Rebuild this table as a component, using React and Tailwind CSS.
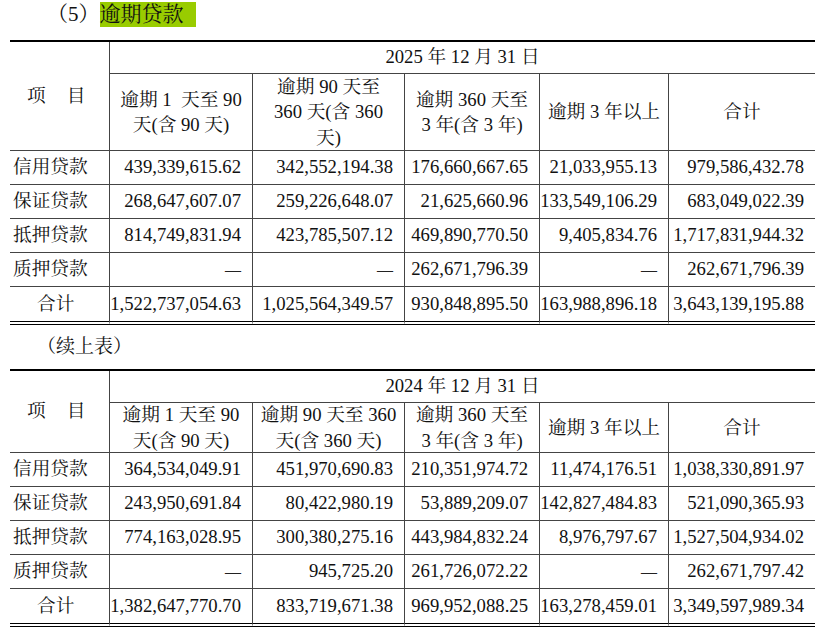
import React from "react";

const grid = "grid grid-cols-[100px_143px_152px_135px_129px_146px]";
const line = "border-[#444]";

const table2025 = {
  year: "2025 年 12 月 31 日",
  headH: "h-[77px]",
  heads: [
    ["逾期 1\u00a0 天至 90", "天(含 90 天)"],
    ["逾期 90 天至", "360 天(含 360", "天)"],
    ["逾期 360 天至", "3 年(含 3 年)"],
    ["逾期 3 年以上"],
    ["合计"],
  ],
  rows: [
    ["信用贷款", "439,339,615.62", "342,552,194.38", "176,660,667.65", "21,033,955.13", "979,586,432.78"],
    ["保证贷款", "268,647,607.07", "259,226,648.07", "21,625,660.96", "133,549,106.29", "683,049,022.39"],
    ["抵押贷款", "814,749,831.94", "423,785,507.12", "469,890,770.50", "9,405,834.76", "1,717,831,944.32"],
    ["质押贷款", "—", "—", "262,671,796.39", "—", "262,671,796.39"],
  ],
  total: ["合计", "1,522,737,054.63", "1,025,564,349.57", "930,848,895.50", "163,988,896.18", "3,643,139,195.88"],
};

const table2024 = {
  year: "2024 年 12 月 31 日",
  headH: "h-[50px]",
  heads: [
    ["逾期 1 天至 90", "天(含 90 天)"],
    ["逾期 90 天至 360", "天(含 360 天)"],
    ["逾期 360 天至", "3 年(含 3 年)"],
    ["逾期 3 年以上"],
    ["合计"],
  ],
  rows: [
    ["信用贷款", "364,534,049.91", "451,970,690.83", "210,351,974.72", "11,474,176.51", "1,038,330,891.97"],
    ["保证贷款", "243,950,691.84", "80,422,980.19", "53,889,209.07", "142,827,484.83", "521,090,365.93"],
    ["抵押贷款", "774,163,028.95", "300,380,275.16", "443,984,832.24", "8,976,797.67", "1,527,504,934.02"],
    ["质押贷款", "—", "945,725.20", "261,726,072.22", "—", "262,671,797.42"],
  ],
  total: ["合计", "1,382,647,770.70", "833,719,671.38", "969,952,088.25", "163,278,459.01", "3,349,597,989.34"],
};

function Num({ value, last, bottom, h }) {
  return (
    <div
      className={`${h} flex items-center justify-end pr-[11px] whitespace-nowrap ${bottom} ${
        last ? "" : `border-r ${line}`
      }`}
    >
      {value === "—" ? <span className="text-[16px] text-[#222]">—</span> : value}
    </div>
  );
}

function LoanTable({ data }) {
  return (
    <div className={`${grid} ml-[10px] w-[805px] border-t-2 border-black text-[18.7px]`}>
      {/* 项目 */}
      <div className={`row-span-2 flex items-center pl-[17px] gap-[21px] border-r border-b ${line}`}>
        <span>项</span>
        <span>目</span>
      </div>
      <div className={`col-span-5 h-[32px] flex items-center justify-center border-b ${line}`}>
        {data.year}
      </div>
      {data.heads.map((h, i) => (
        <div
          key={i}
          className={`${data.headH} flex flex-col items-center justify-center text-center leading-[25.5px] whitespace-nowrap border-b ${line} ${
            i < 4 ? `border-r ${line}` : ""
          }`}
        >
          {h.map((l, j) => (
            <span key={j}>{l}</span>
          ))}
        </div>
      ))}

      {data.rows.map((r, ri) => (
        <React.Fragment key={ri}>
          <div className={`h-[34px] flex items-center pl-[3px] border-r border-b ${line}`}>{r[0]}</div>
          {r.slice(1).map((v, ci) => (
            <Num key={ci} value={v} last={ci === 4} h="h-[34px]" bottom={`border-b ${line}`} />
          ))}
        </React.Fragment>
      ))}

      {/* 合计 */}
      <div className={`h-[38px] flex items-center pl-[27px] border-r ${line} border-b-4 border-b-black border-double`}>
        {data.total[0]}
      </div>
      {data.total.slice(1).map((v, ci) => (
        <Num
          key={ci}
          value={v}
          last={ci === 4}
          h="h-[38px]"
          bottom="border-b-4 border-b-black border-double"
        />
      ))}
    </div>
  );
}

export default function App() {
  return (
    <div className="w-[831px] h-[631px] bg-white text-[#111] font-['Liberation_Serif','Noto_Serif_CJK_SC','Noto_Sans_CJK_SC',serif] overflow-hidden">
      {/* title */}
      <div className="h-[40px] pt-[2px] pl-[47px] flex items-start text-[21px] leading-[25px]">
        <span>（5）</span>
        <span className="bg-[#99cc00] pr-[12px]">逾期贷款</span>
      </div>

      <LoanTable data={table2025} />

      <div className="h-[44px] pl-[37px] flex items-center text-[19px]">（续上表）</div>

      <LoanTable data={table2024} />
    </div>
  );
}
